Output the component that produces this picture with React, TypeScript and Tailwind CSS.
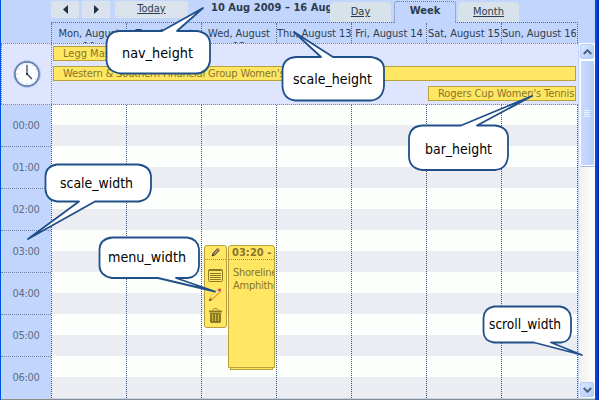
import React from 'react';

const days = [
  ['Mon, August', '10'],
  ['Tue, August', '11'],
  ['Wed, August', '12'],
  ['Thu, August 13'],
  ['Fri, August 14'],
  ['Sat, August 15'],
  ['Sun, August 16'],
];
const hours = ['00:00', '01:00', '02:00', '03:00', '04:00', '05:00', '06:00'];

function NavButton({ dir }: { dir: 'left' | 'right' }) {
  return (
    <div className="flex h-[17px] w-7 items-center justify-center rounded-[2px] bg-[#dae3ec]">
      <svg width="5" height="9" viewBox="0 0 5 9" fill="#223142">
        <path d={dir === 'left' ? 'M5 0V9L0 4.5Z' : 'M0 0V9L5 4.5Z'} />
      </svg>
    </div>
  );
}

function Nav() {
  return (
    <div className="flex h-[22px] pl-[50px] text-[#2c3c4c]">
      <div className="mt-px flex gap-[3px]">
        <NavButton dir="left" />
        <NavButton dir="right" />
      </div>
      <div className="ml-[5px] mt-px h-[17px] w-[73px] rounded-[2px] bg-[#dae3ec] text-center leading-[15px] underline">Today</div>
      <div className="ml-[23px] w-[119px] overflow-hidden whitespace-nowrap pt-px text-[11px] font-bold leading-[14px] tracking-[0.04px]">10 Aug 2009 – 16 Aug 2009</div>
      <div className="mt-[2px] h-5 w-[61px] rounded-t-[4px] bg-[#d8e2ea] text-center leading-[19px] underline">Day</div>
      <div className="z-10 ml-[3px] mt-px h-[22px] w-[62px] rounded-t-[3px] border border-b-0 border-dotted border-[#6c7f9c] bg-[#c2d5fc] text-center font-bold leading-[17px]">Week</div>
      <div className="ml-[2px] mt-[2px] h-5 w-[61px] rounded-t-[4px] bg-[#d8e2ea] text-center leading-[19px] underline">Month</div>
    </div>
  );
}

function DayHeader() {
  return (
    <div className="flex h-[21px] pl-[50px]">
      <div className="flex w-[527px] border-r border-t border-dotted border-[#586d8c]">
        {days.map((d, i) => (
          <div key={i} className="h-5 w-[75px] shrink-0 overflow-hidden whitespace-nowrap border-l border-dotted border-[#586d8c] pt-[4px] text-center leading-[13px] tracking-[-0.06px] text-[#2f3d4d]">
            {d[0]}
            {d[1] && <div>{d[1]}</div>}
          </div>
        ))}
      </div>
    </div>
  );
}

function Clock() {
  return (
    <svg width="30" height="30" viewBox="0 0 30 30">
      <circle cx="15" cy="15" r="13.5" fill="#8fabd8" stroke="#bccdee" />
      <circle cx="15" cy="15" r="12" fill="#fcfdff" stroke="#5c7cac" strokeWidth="1.5" />
      <circle cx="15" cy="15" r="10" fill="none" stroke="#99a5b5" strokeDasharray="1 4.236" strokeDashoffset=".5" />
      <path d="M15 6V15L20 20" fill="none" stroke="#343c48" strokeWidth="1.2" />
      <circle cx="15" cy="15" r="1.2" fill="#343c48" />
    </svg>
  );
}

const bar = 'h-[15px] overflow-hidden whitespace-nowrap border border-[#b8a03a] bg-[#ffe763] pl-[9px] leading-[14px] text-[#88752b]';

function AllDay() {
  return (
    <div className="flex h-[62px] border-y border-dotted border-[#7285a8] bg-[#e0e5ff]">
      <div className="flex w-[50px] items-center justify-center border-l border-dotted border-[#7285a8]"><Clock /></div>
      <div className="flex w-[527px] flex-col gap-[5px] border-l border-dotted border-[#7285a8] pl-px pt-[2px]">
        <div className={bar + ' w-[74px]'}>Legg Mason Tennis</div>
        <div className={bar + ' w-[523px] tracking-[-0.14px]'}>Western &amp; Southern Financial Group Women's Open</div>
        <div className={bar + ' ml-[375px] w-[148px] tracking-[-0.1px]'}>Rogers Cup Women's Tennis</div>
      </div>
    </div>
  );
}

function EventMenu() {
  return (
    <div className="h-[83px] w-[23px] rounded-[3px] border border-[#b8a03a] bg-[#ffe763]">
      <svg width="21" height="81" viewBox="0 0 21 81" fill="none">
        <path d="M7 10L8 7L12 3L14 5L10 9Z" fill="#a28e5a" stroke="#554a35" strokeWidth=".8" />
        <path d="M11 3L13 2L15 4L14 5Z" fill="#b56b66" />
        <path d="M7 10L8 8L9 9Z" fill="#222" />
        <path d="M0 13.5H21" stroke="#a89135" strokeDasharray="1 1" />
        <rect x="3.5" y="23.5" width="14" height="12" rx="1" stroke="#8e7a22" />
        <path d="M4 24.5H17M5 27.5H16M5 29.5H16M5 31.5H16M5 33.5H16" stroke="#8e7a22" />
        <path d="M4 55L5.5 51L13 43.5L15.5 46L8 53.5Z" fill="#f5b82c" stroke="#c18f25" strokeWidth=".5" />
        <path d="M6 51L13 44L14 45L7 52Z" fill="#fff1a4" />
        <path d="M12.5 44L14 42.5H15.5L16.5 44L15 46Z" fill="#c95058" />
        <path d="M12 44.5L14.5 47" stroke="#ddd" />
        <path d="M4 55L5 52.5L6.5 54Z" fill="#333" />
        <path d="M7.5 64.5L9 62.5H12L13.5 64.5" stroke="#a38d30" />
        <path d="M4 65.5H17" stroke="#8e7a22" strokeWidth="2" />
        <path d="M5 67H16V76L15 77H6L5 76Z" fill="#8e7a22" />
        <path d="M7.5 68V75M10.5 68V75M13.5 68V75" stroke="#cdb548" />
      </svg>
    </div>
  );
}

function EventCard() {
  return (
    <div className="h-[125px] w-[47px] text-[#88752b]">
      <div className="h-[123px] overflow-hidden whitespace-nowrap rounded-t-[3px] border border-[#b8a03a] bg-[#ffe763]">
        <div className="h-[14px] border-b border-dotted border-[#a89135] pl-[3px] font-bold leading-[14px] tracking-[0.05px]">03:20 - 06:00</div>
        <div className="pl-1 pt-[6px] leading-[13px] tracking-[-0.25px]">Shoreline<br />Amphitheatre</div>
      </div>
      <div className="mx-[2px] h-[2px] border border-t-0 border-[#b8a03a] bg-[#ffe763]" />
    </div>
  );
}

function Body() {
  return (
    <div className="flex h-[293px]">
      <div className="w-[50px] overflow-hidden bg-[#c2d5fc]">
        {hours.map((h) => (
          <div key={h} className="h-[42px] border-b border-dotted border-[#7285a8] text-center leading-[41px] tracking-[-0.3px] text-[#5b6f86]">{h}</div>
        ))}
      </div>
      <div className="relative flex w-[527px] border-r border-dotted border-[#3d5575] bg-[repeating-linear-gradient(180deg,#fcfffc_0px,#fcfffc_20px,#ececf3_20px,#ececf3_41px,#fcfffc_41px,#fcfffc_42px)]">
        {days.map((_, i) => (
          <div key={i} className="w-[75px] shrink-0 border-l border-dotted border-[#3d5575]" />
        ))}
        <div className="absolute left-[153px] top-[140px] flex gap-px">
          <EventMenu />
          <EventCard />
        </div>
      </div>
    </div>
  );
}

function ScrollButton({ up }: { up?: boolean }) {
  return (
    <div className="flex h-[15px] w-[14px] shrink-0 items-center justify-center rounded-[2px] border border-[#b4caf7] bg-gradient-to-br from-[#dce7ff] to-[#b4cbfa]">
      <svg width="9" height="6" viewBox="0 0 9 6" fill="none" stroke="#4d6185" strokeWidth="2">
        <path d={up ? 'M.7 5L4.5 1.3L8.3 5' : 'M.7 1L4.5 4.7L8.3 1'} />
      </svg>
    </div>
  );
}

function Scrollbar() {
  return (
    <div className="flex h-[355px] w-4 flex-col items-center bg-gradient-to-r from-[#f2f0ec] to-[#fefefb]">
      <div className="flex h-[17px] w-[15px] items-center justify-center bg-white"><ScrollButton up /></div>
      <div className="flex h-[106px] w-[15px] flex-col items-center justify-center gap-px rounded-[2px] border border-white bg-gradient-to-r from-[#c9daff] to-[#b8cdfb] shadow-[0_1px_0_#9fb7e2]">
        {[0, 1, 2, 3].map((n) => <div key={n} className="h-px w-[6px] bg-[#eef4ff]" />)}
      </div>
      <div className="flex-1" />
      <div className="mb-px"><ScrollButton /></div>
    </div>
  );
}

const callouts = [
  { label: 'nav_height', x: 122, y: 58, w: 71, d: 'M119 31H162L203 8L177 31H197Q210 33 210 44V61Q208 73 196 73.5H121Q107 72 106.5 60V44Q107 32 119 31Z' },
  { label: 'scale_height', x: 293, y: 84, w: 79, d: 'M296 57H321L294 32L333 57H371Q384 59 384 69V86Q383 99 371 100.5H295Q283 99 282.5 86V70Q283 58 296 57Z' },
  { label: 'bar_height', x: 425, y: 154, w: 67, d: 'M423 125.5H461L532 96L477 125.5H495Q508 127 508 138V156Q507 169 495 170H422Q409 168 409 156V138Q410 126 423 125.5Z' },
  { label: 'scale_width', x: 60, y: 188, w: 73, d: 'M57 164.5H138Q150 166 151 176V188Q150 200 139 201.5H95L28 239L79 201.5H57Q46 200 45.5 189V176Q46 166 57 164.5Z' },
  { label: 'menu_width', x: 108, y: 262, w: 78, d: 'M112 237.5H187Q198 239 199 249V266Q198 277 188 278H176L215 291.5L158 278H112Q100 276 99.5 266V249Q100 239 112 237.5Z' },
  { label: 'scroll_width', x: 489, y: 329, w: 72, d: 'M494 306.5H560Q570 308 571 318V332Q570 342 561 342.5H551L582 355L534 342.5H494Q484 341 483.5 332V318Q484 308 494 306.5Z' },
];

function Callouts() {
  return (
    <svg className="absolute left-0 top-0 z-20 h-[400px] w-[599px]" viewBox="0 0 599 400">
      {callouts.map((c) => (
        <g key={c.label}>
          <path d={c.d} fill="#fff" stroke="#205089" strokeWidth="1.8" strokeLinejoin="round" />
          <text x={c.x} y={c.y} textLength={c.w} lengthAdjust="spacingAndGlyphs" className="text-[14.5px]" fill="#000">{c.label}</text>
        </g>
      ))}
    </svg>
  );
}

export default function App() {
  return (
    <div className="relative flex h-[400px] w-[599px] overflow-hidden bg-[#c2d5fc] font-['DejaVu_Sans_Condensed','DejaVu_Sans',sans-serif] text-[11px]">
      <div className="w-px bg-[#0054e3]" />
      <div className="w-[594px] border-b border-[#8d8e83]">
        <Nav />
        <div className="flex h-[377px]">
          <div className="w-[577px]">
            <DayHeader />
            <AllDay />
            <Body />
          </div>
          <div className="w-[17px] pl-px pt-[21px]"><Scrollbar /></div>
        </div>
      </div>
      <div className="w-1 bg-gradient-to-r from-[#0846d2] via-[#0047df] to-[#001d9c]" />
      <Callouts />
    </div>
  );
}
